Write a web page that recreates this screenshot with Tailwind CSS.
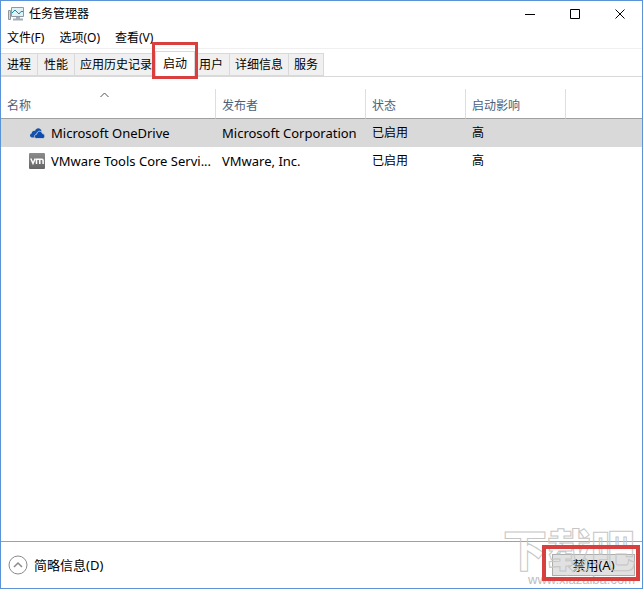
<!DOCTYPE html>
<html lang="zh-CN">
<head>
    <meta charset="UTF-8">
    <meta name="viewport" content="width=device-width, initial-scale=1.0">
    <title>任务管理器</title>
    <script src="https://cdn.jsdelivr.net/npm/@tailwindcss/browser@4"></script>
    <style>
        body { font-family: 'Noto Sans', 'Noto Sans CJK SC', sans-serif; }
        .watermark { -webkit-text-stroke: 1px #c6c6c6; }
    </style>
</head>
<body class="bg-white text-black text-[12px] leading-4 flex flex-col min-h-screen border border-[#5b93d8]">

    <!-- Title bar -->
    <header class="flex items-center h-[26px] pl-[7px]">
        <svg class="w-4 h-4" viewBox="0 0 16 16" fill="none">
            <path d="M.5 4.500h2v9h-2z" fill="#d5d9dc" stroke="#90989e"/>
            <path d="M3.500 1.500h12v9h-12z" fill="#dff3f7" stroke="#8b9aa3"/>
            <path d="M4 7l3-3 4 4 2-2.500h2" stroke="#2586a0"/>
            <path d="M8 11h4v2H8z" fill="#a3adb4"/>
            <path d="M5 13.500h10" stroke="#a3adb4" stroke-width="2"/>
        </svg>
        <h1 class="ml-[5px] grow">任务管理器</h1>
        <button aria-label="最小化" class="w-[45px] h-[26px] flex items-center justify-center">
            <svg class="w-[11px] h-[11px]" viewBox="0 0 11 11" stroke="#000"><path d="M0 5.500h10"/></svg>
        </button>
        <button aria-label="最大化" class="w-[45px] h-[26px] flex items-center justify-center">
            <svg class="w-[11px] h-[11px]" viewBox="0 0 11 11" fill="none" stroke="#000"><path d="M.5.5h9v9h-9z"/></svg>
        </button>
        <button aria-label="关闭" class="w-[44px] h-[26px] flex items-center justify-center">
            <svg class="w-[11px] h-[11px]" viewBox="0 0 11 11" stroke="#000"><path d="M.5.5l9 9M9.500.5l-9 9"/></svg>
        </button>
    </header>

    <!-- Menu -->
    <nav class="flex items-end gap-[15px] h-[22px] px-[6px] pb-[2px] border-b border-[#f0f0f0]">
        <button>文件(F)</button>
        <button>选项(O)</button>
        <button>查看(V)</button>
    </nav>

    <!-- Tabs -->
    <div role="tablist" class="flex items-end h-7 border-b border-[#d9d9d9]">
        <button role="tab" class="h-[23px] px-[6px] bg-[#f0f0f0] border-y border-r border-[#d9d9d9]">进程</button>
        <button role="tab" class="h-[23px] px-[6px] bg-[#f0f0f0] border-y border-r border-[#d9d9d9]">性能</button>
        <button role="tab" class="h-[23px] px-[5px] bg-[#f0f0f0] border-y border-[#d9d9d9]">应用历史记录</button>
        <div class="relative z-10 -mx-[2px] -mb-px">
            <button role="tab" aria-selected="true" class="block h-[26px] px-[7px] pb-[2px] bg-white border border-b-0 border-[#d9d9d9]">启动</button>
            <div class="absolute -inset-x-[3px] -top-[9px] -bottom-[2px] border-3 border-[#d8403f] pointer-events-none"></div>
        </div>
        <button role="tab" class="h-[23px] px-[6px] bg-[#f0f0f0] border-y border-r border-[#d9d9d9]">用户</button>
        <button role="tab" class="h-[23px] px-[5px] bg-[#f0f0f0] border-y border-r border-[#d9d9d9]">详细信息</button>
        <button role="tab" class="h-[23px] px-[5px] bg-[#f0f0f0] border-y border-r border-[#d9d9d9]">服务</button>
    </div>

    <!-- Startup items -->
    <main class="grow pt-3">
        <table class="w-full table-fixed border-separate border-spacing-0">
            <colgroup>
                <col class="w-[215px]">
                <col class="w-[150px]">
                <col class="w-[100px]">
                <col class="w-[100px]">
                <col>
            </colgroup>
            <thead>
                <tr class="h-[30px] text-left align-bottom text-[#4c607a]">
                    <th class="relative font-normal px-[6px] pb-1 border-r border-b border-r-[#dedede] border-b-[#a0a0a0]">
                        <svg class="absolute top-[3px] left-[99px] w-[9px] h-[6px]" viewBox="0 0 9 6" fill="none" stroke="#555"><path d="M.5 5l4-4 4 4"/></svg>
                        名称
                    </th>
                    <th class="font-normal px-[6px] pb-1 border-r border-b border-r-[#dedede] border-b-[#a0a0a0]">发布者</th>
                    <th class="font-normal px-[6px] pb-1 border-r border-b border-r-[#dedede] border-b-[#a0a0a0]">状态</th>
                    <th class="font-normal px-[6px] pb-1 border-r border-b border-r-[#dedede] border-b-[#a0a0a0]">启动影响</th>
                    <td class="border-b border-[#a0a0a0]"></td>
                </tr>
            </thead>
            <tbody>
                <tr class="h-7 bg-[#d9d9d9]">
                    <td class="pl-7">
                        <div class="flex items-center gap-[6px]">
                            <svg class="w-4 h-4 shrink-0" viewBox="0 0 16 16">
                                <path d="M3 12.500C.5 12.300.4 9 2.700 8.500 2.700 6.500 4.500 5.500 6 6 7 2.500 11.500 2.300 12.500 6l-4 6.500z" fill="#1552a8"/>
                                <path d="M7.500 13.500c-2.800-.2-2.700-4 .2-4.300C8 5.500 12.600 5.300 13.500 8.600c3 .3 3 4.700.3 4.900z" fill="#0c4cac" stroke="#d9d9d9" stroke-width=".8"/>
                            </svg>
                            <span class="whitespace-nowrap text-[13px]">Microsoft OneDrive</span>
                        </div>
                    </td>
                    <td class="px-[6px] text-[13px] whitespace-nowrap">Microsoft Corporation</td>
                    <td class="px-[6px]">已启用</td>
                    <td class="px-[6px]">高</td>
                    <td></td>
                </tr>
                <tr class="h-7">
                    <td class="pl-7">
                        <div class="flex items-center gap-[6px]">
                            <svg class="w-4 h-4 shrink-0" viewBox="0 0 16 16">
                                <defs>
                                    <linearGradient id="vm" x2="0" y2="1"><stop stop-color="#8c8c8c"/><stop offset="1" stop-color="#666"/></linearGradient>
                                </defs>
                                <rect width="16" height="16" rx="1" fill="url(#vm)"/>
                                <path d="M1.800 5.500l2.200 5 2.200-5M7.500 11V6.200h5.400q1.200 0 1.200 1.200V11M10.800 6.200V11" fill="none" stroke="#fff" stroke-width="1.500"/>
                            </svg>
                            <span class="whitespace-nowrap text-[13px]">VMware Tools Core Servi...</span>
                        </div>
                    </td>
                    <td class="px-[6px] text-[13px] whitespace-nowrap">VMware, Inc.</td>
                    <td class="px-[6px]">已启用</td>
                    <td class="px-[6px]">高</td>
                    <td></td>
                </tr>
            </tbody>
        </table>
    </main>

    <!-- Footer -->
    <footer class="relative flex items-center justify-between h-[47px] px-[7px] text-[13px] border-t border-[#a0a0a0]">
        <button class="flex items-center gap-[6px]">
            <svg class="w-5 h-5" viewBox="0 0 20 20" fill="none"><circle cx="10" cy="10" r="9" stroke="#8a8a8a"/><path d="M6 12l4-4 4 4" stroke="#8a8a8a" stroke-width="1.500"/></svg>
            简略信息(D)
        </button>
        <div class="relative">
            <button class="block w-[83px] h-[22px] bg-[#e1e1e1] border border-[#adadad]">禁用(A)</button>
            <div class="absolute z-10 -left-[10px] -right-[5px] -top-[9px] -bottom-[5px] border-4 border-[#d8403f] pointer-events-none"></div>
        </div>
        <div class="absolute right-[7px] -top-4 pointer-events-none text-right" aria-hidden="true">
            <div class="watermark text-transparent font-black text-[44px] leading-12 whitespace-nowrap">下载吧</div>
            <div class="text-[#bdbdbd] leading-3 font-[Liberation_Sans]">www.xiazaiba.com</div>
        </div>
    </footer>

</body>
</html>
